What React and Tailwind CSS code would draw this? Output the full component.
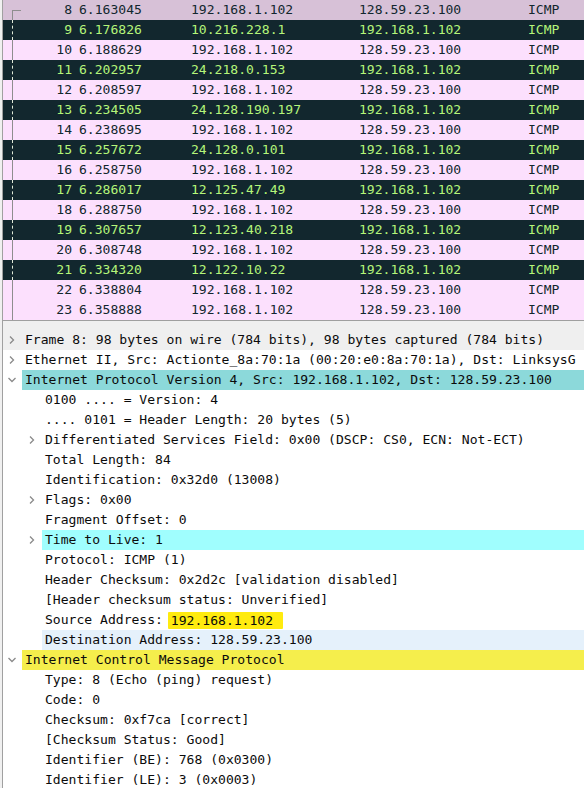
import React from "react";

const packets = [
  { no: 8, time: "6.163045", src: "192.168.1.102", dst: "128.59.23.100", kind: "sel" },
  { no: 9, time: "6.176826", src: "10.216.228.1", dst: "192.168.1.102", kind: "dark" },
  { no: 10, time: "6.188629", src: "192.168.1.102", dst: "128.59.23.100", kind: "pink" },
  { no: 11, time: "6.202957", src: "24.218.0.153", dst: "192.168.1.102", kind: "dark" },
  { no: 12, time: "6.208597", src: "192.168.1.102", dst: "128.59.23.100", kind: "pink" },
  { no: 13, time: "6.234505", src: "24.128.190.197", dst: "192.168.1.102", kind: "dark" },
  { no: 14, time: "6.238695", src: "192.168.1.102", dst: "128.59.23.100", kind: "pink" },
  { no: 15, time: "6.257672", src: "24.128.0.101", dst: "192.168.1.102", kind: "dark" },
  { no: 16, time: "6.258750", src: "192.168.1.102", dst: "128.59.23.100", kind: "pink" },
  { no: 17, time: "6.286017", src: "12.125.47.49", dst: "192.168.1.102", kind: "dark" },
  { no: 18, time: "6.288750", src: "192.168.1.102", dst: "128.59.23.100", kind: "pink" },
  { no: 19, time: "6.307657", src: "12.123.40.218", dst: "192.168.1.102", kind: "dark" },
  { no: 20, time: "6.308748", src: "192.168.1.102", dst: "128.59.23.100", kind: "pink" },
  { no: 21, time: "6.334320", src: "12.122.10.22", dst: "192.168.1.102", kind: "dark" },
  { no: 22, time: "6.338804", src: "192.168.1.102", dst: "128.59.23.100", kind: "pink" },
  { no: 23, time: "6.358888", src: "192.168.1.102", dst: "128.59.23.100", kind: "pink" },
];

const rowStyles = {
  sel: "bg-[#d7c1d7] text-[#12272e]",
  dark: "bg-[#12272e] text-[#b5f57a]",
  pink: "bg-[#fce0fd] text-[#12272e]",
};

// tree: "open" | "closed" | null
const details = [
  { level: 0, tree: "closed", text: "Frame 8: 98 bytes on wire (784 bits), 98 bytes captured (784 bits)", row: "bg-[#efefef]" },
  { level: 0, tree: "closed", text: "Ethernet II, Src: Actionte_8a:70:1a (00:20:e0:8a:70:1a), Dst: LinksysG" },
  { level: 0, tree: "open", text: "Internet Protocol Version 4, Src: 192.168.1.102, Dst: 128.59.23.100", hl: "bg-[#8cd9da]" },
  { level: 1, text: "0100 .... = Version: 4" },
  { level: 1, text: ".... 0101 = Header Length: 20 bytes (5)" },
  { level: 1, tree: "closed", text: "Differentiated Services Field: 0x00 (DSCP: CS0, ECN: Not-ECT)" },
  { level: 1, text: "Total Length: 84" },
  { level: 1, text: "Identification: 0x32d0 (13008)" },
  { level: 1, tree: "closed", text: "Flags: 0x00" },
  { level: 1, text: "Fragment Offset: 0" },
  { level: 1, tree: "closed", text: "Time to Live: 1", hl: "bg-[#a0fefe]" },
  { level: 1, text: "Protocol: ICMP (1)" },
  { level: 1, text: "Header Checksum: 0x2d2c [validation disabled]" },
  { level: 1, text: "[Header checksum status: Unverified]" },
  { level: 1, text: "Source Address: ", mark: "192.168.1.102 " },
  { level: 1, text: "Destination Address: 128.59.23.100", hl: "bg-[#e5f1fb]" },
  { level: 0, tree: "open", text: "Internet Control Message Protocol", hl: "bg-[#f5ee4c]" },
  { level: 1, text: "Type: 8 (Echo (ping) request)" },
  { level: 1, text: "Code: 0" },
  { level: 1, text: "Checksum: 0xf7ca [correct]" },
  { level: 1, text: "[Checksum Status: Good]" },
  { level: 1, text: "Identifier (BE): 768 (0x0300)" },
  { level: 1, text: "Identifier (LE): 3 (0x0003)" },
];

const Chevron = ({ open }) => (
  <svg width="10" height="10" viewBox="0 0 10 10" className="shrink-0">
    {open ? (
      <polyline points="1.5,3 5,6.5 8.5,3" fill="none" stroke="#8a8a8a" strokeWidth="1.3" />
    ) : (
      <polyline points="3,1.5 6.5,5 3,8.5" fill="none" stroke="#8a8a8a" strokeWidth="1.3" />
    )}
  </svg>
);

const PacketRow = ({ p, first }) => {
  const isDark = p.kind === "dark";
  return (
    <div className={`relative flex h-5 items-center ${rowStyles[p.kind]}`}>
      {/* tree line */}
      {first ? (
        <>
          <span className="absolute left-[9px] top-[10px] h-[1px] w-[9px] bg-[#8e8e8e]" />
          <span className="absolute left-[9px] top-[10px] bottom-0 w-[1px] bg-[#8e8e8e]" />
        </>
      ) : isDark ? (
        <span className="absolute left-[9px] top-0 bottom-0 border-l border-dashed border-[#dfe9d8]" />
      ) : (
        <span className="absolute left-[9px] top-0 bottom-0 w-[1px] bg-[#8e8e8e]" />
      )}
      <span className="w-[73px] shrink-0 pr-[4px] text-right">{p.no}</span>
      <span className="w-[112px] shrink-0 pl-[3px]">{p.time}</span>
      <span className="w-[168px] shrink-0 pl-[3px]">{p.src}</span>
      <span className="w-[168px] shrink-0 pl-[3px]">{p.dst}</span>
      <span className="pl-[4px]">ICMP</span>
    </div>
  );
};

const DetailRow = ({ d }) => (
  <div className={`flex h-5 items-center ${d.row || "bg-white"}`}>
    <div className={`flex h-5 shrink-0 items-center ${d.level === 0 ? "w-[19px] pl-[4px]" : "w-[39px] pl-[24px]"}`}>
      {d.tree && <Chevron open={d.tree === "open"} />}
    </div>
    <div className={`flex h-5 flex-1 items-center overflow-hidden whitespace-pre pl-[3px] text-[#0b0b0b] ${d.hl || ""}`}>
      <span className="whitespace-pre">{d.text}</span>
      {d.mark && (
        <span className="-ml-[3px] inline-block h-[17px] whitespace-pre rounded-[1px] bg-[#ffeb0f] pl-[3px] pr-[2px] leading-[17px]">
          {d.mark}
        </span>
      )}
    </div>
  </div>
);

export default function App() {
  return (
    <div className="h-[788px] w-[584px] overflow-hidden bg-[#f0f0f0] font-['DejaVu_Sans_Mono',monospace] text-[13.07px] leading-5">
      <div className="flex h-full">
        <div className="w-[2px] shrink-0 bg-[#f0f0f0]" />
        <div className="flex min-w-0 flex-1 flex-col border-l border-[#a0a0a0]">
          {/* header remnant */}
          <div className="flex h-[3px] bg-[#f0f0f0]">
            <div className="w-[73px] border-r border-white" />
            <div className="w-[112px] border-r border-white" />
            <div className="w-[168px] border-r border-white" />
            <div className="w-[168px] border-r border-white" />
          </div>
          {/* packet list */}
          <div className="flex flex-col">
            {packets.map((p, i) => (
              <PacketRow key={p.no} p={p} first={i === 0} />
            ))}
          </div>
          {/* splitter */}
          <div className="h-[10px] shrink-0 border-t border-[#a0a0a0] bg-[#f0f0f0]" />
          {/* details */}
          <div className="flex flex-1 flex-col bg-white">
            {details.map((d, i) => (
              <DetailRow key={i} d={d} />
            ))}
          </div>
        </div>
      </div>
    </div>
  );
}
